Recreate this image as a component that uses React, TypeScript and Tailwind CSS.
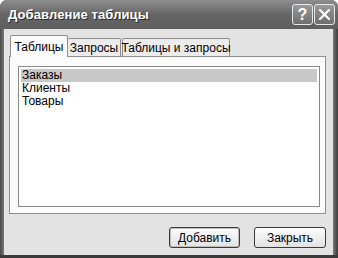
import React from "react";

const ui = { fontFamily: "'Liberation Sans', Arial, sans-serif" };

export default function App() {
  return (
    <div className="w-[338px] h-[258px] flex flex-col bg-[#3c3c3c] overflow-hidden rounded-t-[7px]" style={ui}>
      {/* Title bar */}
      <div className="h-[29px] shrink-0 flex items-center pl-[8px] pr-[3px] bg-gradient-to-b from-[#8e8e8e] via-[#666666] to-[#5e5e5e]">
        <span
          className="text-white font-bold text-[13px] tracking-[0.1px] flex-1 whitespace-nowrap"
          style={{ textShadow: "1px 1px 0 #2a2a2a" }}
        >
          Добавление таблицы
        </span>
        <div className="flex gap-[1px]">
          <div className="w-[21px] h-[21px] rounded-[3px] border border-[#e8e8e8] bg-gradient-to-b from-[#9a9a9a] to-[#6e6e6e] flex items-center justify-center text-white font-bold text-[16px]">
            ?
          </div>
          <div className="w-[21px] h-[21px] rounded-[3px] border border-[#e8e8e8] bg-gradient-to-b from-[#9a9a9a] to-[#6e6e6e] flex items-center justify-center">
            <svg width="11" height="11" viewBox="0 0 11 11">
              <path d="M1 1 L10 10 M10 1 L1 10" stroke="white" strokeWidth="2.2" strokeLinecap="square" />
            </svg>
          </div>
        </div>
      </div>
      {/* Body */}
      <div className="flex-1 flex min-h-0">
        <div className="w-[4px] bg-gradient-to-r from-[#4a4a4a] to-[#7a7a7a]" />
        <div className="flex-1 flex flex-col bg-[#e3e3e3] pt-[6px] pl-[5px] pr-[7px]">
          {/* Tabs */}
          <div className="flex items-end h-[21px] pl-[1px] relative z-10 whitespace-nowrap">
            <div className="h-[22px] w-[58px] bg-[#fcfcfc] border border-b-0 border-[#8f8f8f] rounded-t-[2px] flex items-center justify-center text-[12px] text-black mb-[-1px]">
              Таблицы
            </div>
            <div className="h-[18px] w-[53px] bg-[#ececec] border border-b-0 border-l-0 border-[#8f8f8f] rounded-t-[2px] flex items-center justify-center text-[12px] text-black">
              Запросы
            </div>
            <div className="h-[18px] w-[108px] ml-[1px] bg-[#ececec] border border-b-0 border-[#8f8f8f] rounded-t-[2px] flex items-center justify-center text-[12px] text-black">
              Таблицы и запросы
            </div>
          </div>
          {/* Panel */}
          <div className="h-[158px] bg-[#fbfbfb] border border-[#8f8f8f] pt-[9px] pl-[8px] pr-[5px] pb-[6px] flex">
            <div className="flex-1 bg-white border border-[#8a8a8a] p-[2px] flex flex-col text-[12px] text-black leading-[13px]">
              <div className="bg-[#c8c8c8] pl-[1px] h-[13px]">Заказы</div>
              <div className="pl-[1px] h-[13px]">Клиенты</div>
              <div className="pl-[1px] h-[13px]">Товары</div>
            </div>
          </div>
          {/* Buttons */}
          <div className="flex justify-end gap-[14px] mt-[13px]">
            <div className="w-[71px] h-[21px] rounded-[3px] border border-[#3a3a3a] bg-gradient-to-b from-[#fdfdfd] to-[#e2e2e2] shadow-[inset_0_0_0_1px_#bdbdbd] flex items-center justify-center text-[12px] text-black">
              Добавить
            </div>
            <div className="w-[72px] h-[21px] rounded-[3px] border border-[#3a3a3a] bg-gradient-to-b from-[#fdfdfd] to-[#e2e2e2] flex items-center justify-center text-[12px] text-black">
              Закрыть
            </div>
          </div>
        </div>
        <div className="w-[5px] bg-gradient-to-r from-[#7a7a7a] to-[#3a3a3a]" />
      </div>
      <div className="h-[3px] bg-[#3a3a3a]" />
    </div>
  );
}
